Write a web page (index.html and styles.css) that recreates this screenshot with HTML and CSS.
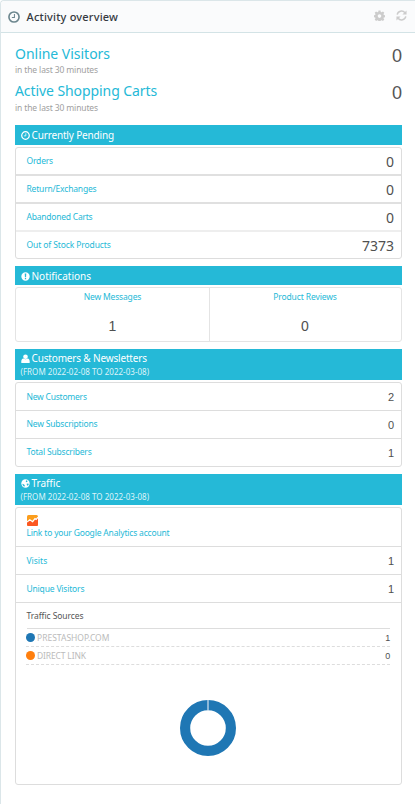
FILE: index.html
```
<!DOCTYPE html>
<html lang="en">
<head>
<meta charset="utf-8">
<title>Activity overview</title>
<link rel="stylesheet" href="styles.css">
</head>
<body>
<svg class="defs" aria-hidden="true">
  <symbol id="clock" viewBox="0 0 14 14"><circle cx="7" cy="7" r="5.9" fill="none" stroke="currentColor" stroke-width="1.9"/><path d="M7.500 3.600v4H4.500" fill="none" stroke="currentColor" stroke-width="1.200"/></symbol>
  <symbol id="gear" viewBox="0 0 24 24"><path fill="currentColor" fill-rule="evenodd" d="M9.800 1h4.400l.6 3.100 2 .8 2.700-1.800 3 3-1.800 2.700.8 2 2.500.6v4.200l-2.500.6-.8 2 1.800 2.700-3 3-2.700-1.800-2 .8-.6 3.100H9.800l-.6-3.100-2-.8-2.700 1.800-3-3 1.800-2.700-.8-2-2.500-.6v-4.200l2.500-.6.8-2L1.500 6.100l3-3 2.700 1.800 2-.8zM12 9.300a4 4 0 1 0 0 8 4 4 0 0 0 0-8z"/></symbol>
  <symbol id="refresh" viewBox="0 0 24 24"><path fill="none" stroke="currentColor" stroke-width="3.200" d="M2.600 10a9.500 9.500 0 0 1 16.800-4M21.400 14a9.500 9.500 0 0 1-16.800 4"/><path fill="currentColor" d="M23 1v9h-9zM1 23v-9h9z"/></symbol>
  <symbol id="alert" viewBox="0 0 14 14"><path fill="currentColor" fill-rule="evenodd" d="M7 .5a6.500 6.500 0 1 0 0 13 6.500 6.500 0 0 0 0-13zM5.800 2.500h2.400L7.900 8.200H6.100zM6 9.300h2v2H6z"/></symbol>
  <symbol id="user" viewBox="0 0 14 14"><circle cx="7" cy="4.200" r="3.600" fill="currentColor"/><path fill="currentColor" d="M.5 14c-.5-4.500.8-6.800 3.300-6.900 1.800 1.500 4.600 1.500 6.400 0 2.500.1 3.800 2.400 3.300 6.900z"/></symbol>
  <symbol id="globe" viewBox="0 0 14 14"><circle cx="7" cy="7" r="6.500" fill="currentColor"/><path class="land" d="M8 1.800l2.500 1.400-1.200 1.600-1.600.3-.2-1.500zM1.800 7.300l2.400.9 1.800 1.400-.8 2.600-1.700-1.200zM8.800 7.500l2.400-.6.900 1.300-1.400 2.300-1.500-.8z"/></symbol>
</svg>
<section class="panel">
  <header class="panel-head">
    <svg class="head-icon"><use href="#clock"/></svg>
    <h1 class="title">Activity overview</h1>
    <svg class="tool"><use href="#gear"/></svg>
    <svg class="tool"><use href="#refresh"/></svg>
  </header>
  <div class="panel-body">
    <div class="live">
      <div><a class="live-name">Online Visitors</a><small class="note">in the last 30 minutes</small></div>
      <span class="live-value">0</span>
    </div>
    <div class="live">
      <div><a class="live-name carts">Active Shopping Carts</a><small class="note low">in the last 30 minutes</small></div>
      <span class="live-value">0</span>
    </div>

    <h2 class="bar pending-bar"><svg><use href="#clock"/></svg><span class="tight">Currently Pending</span></h2>
    <ul class="box pending">
      <li><a>Orders</a><b>0</b></li>
      <li><a>Return/Exchanges</a><b>0</b></li>
      <li><a class="tighter">Abandoned Carts</a><b>0</b></li>
      <li><a class="looser">Out of Stock Products</a><b>7373</b></li>
    </ul>

    <h2 class="bar notice-bar"><svg><use href="#alert"/></svg><span>Notifications</span></h2>
    <div class="box notices">
      <div><a>New Messages</a><b>1</b></div>
      <div><a class="looser">Product Reviews</a><b>0</b></div>
    </div>

    <div class="bar tall-bar">
      <h2><svg><use href="#user"/></svg><span class="tight">Customers &amp; Newsletters</span></h2>
      <small>(FROM 2022-02-08 TO 2022-03-08)</small>
    </div>
    <ul class="box customers">
      <li><a class="tighter">New Customers</a><b>2</b></li>
      <li><a>New Subscriptions</a><b>0</b></li>
      <li><a>Total Subscribers</a><b>1</b></li>
    </ul>

    <div class="bar tall-bar">
      <h2><svg><use href="#globe"/></svg><span>Traffic</span></h2>
      <small>(FROM 2022-02-08 TO 2022-03-08)</small>
    </div>
    <ul class="box traffic">
      <li class="analytics">
        <svg viewBox="0 0 11 11"><rect width="11" height="11" rx="1.500" fill="#fb9d1c"/><path d="M0 7 3.200 5 6 7.500 8 3.500 11 3.300V9.500a1.500 1.500 0 0 1-1.500 1.500h-8A1.500 1.500 0 0 1 0 9.500z" fill="#fb5722"/><path d="M0 7 2.800 4.700 5.600 6.700 8 3.600 9.200 4.300 11 2.200" fill="none" stroke="#fff" stroke-width="1.300"/></svg>
        <a>Link to your Google Analytics account</a>
      </li>
      <li><a class="natural">Visits</a><b>1</b></li>
      <li><a>Unique Visitors</a><b>1</b></li>
      <li class="sources">
        <h3>Traffic Sources</h3>
        <div class="source"><i class="dot blue"></i><span class="natural">PRESTASHOP.COM</span><em>1</em></div>
        <div class="source"><i class="dot orange"></i><span>DIRECT LINK</span><em>0</em></div>
        <svg class="donut" viewBox="0 0 56 56"><circle cx="28" cy="28" r="22.900" fill="none" stroke="#1f77b4" stroke-width="10.200"/><path d="M28 0v11" stroke="#d5e4f0" stroke-width="1.200"/></svg>
      </li>
    </ul>
  </div>
</section>
</body>
</html>
```
FILE: styles.css
```
* { box-sizing: border-box; }
body { margin: 0; background: #fff; font: 8.5px/12px "Noto Sans", sans-serif; color: #555; }
h1, h2, h3, ul { margin: 0; padding: 0; font-weight: 400; list-style: none; }
svg { display: block; flex: none; }
.defs { position: absolute; width: 0; height: 0; }
a { color: #25b9d7; letter-spacing: -.18px; white-space: nowrap; }
b, em { font-weight: 400; font-style: normal; }

.panel { height: 804px; border: solid #dbe6e9; border-width: 1px 0 0 1px; border-radius: 4px 0 0; }
.panel-head { display: flex; align-items: center; height: 32px; padding: 0 8.5px 0 7px; background: #fafbfc; border-bottom: 1px solid #d3e3e6; border-radius: 4px 0 0; }
.head-icon { width: 12px; height: 12px; margin-right: 6.5px; color: #6c868e; }
.title { flex: 1; font-size: 11px; font-weight: 500; line-height: 16px; letter-spacing: .19px; color: #363a41; }
.tool { width: 11px; height: 11px; margin: -2px 0 0 10.500px; color: #ccc; }

.panel-body { padding: 12px 13px 0 14px; }
.live { display: flex; justify-content: space-between; height: 37px; }
.live-name { display: block; font-size: 14px; line-height: 18px; letter-spacing: -.02px; }
.carts { letter-spacing: -.08px; }
.note { display: block; margin-top: 1px; font-size: 8.5px; line-height: 12px; letter-spacing: -.13px; color: #a0a0a0; }
.low { margin-top: 2px; }
.live-value { font: 18px/22px "Liberation Sans", sans-serif; color: #555; }

.bar { background: #25b9d7; color: #fff; font-size: 10px; padding: 0 5px; }
.pending-bar, .notice-bar, .bar h2 { display: flex; align-items: center; }
.bar svg { width: 9px; height: 9px; margin: 1px 1.500px 0 1px; }
.pending-bar { height: 20px; margin-top: 6px; }
.notice-bar { height: 19px; margin-top: 7px; }
.tall-bar { height: 31px; margin-top: 7px; padding-top: 2px; }
.bar h2 { height: 14px; font-size: 10px; }
.bar small { display: block; padding: 1px 0 0 .5px; font-size: 8px; line-height: 12px; letter-spacing: .03px; color: #ddf4f9; }
.tight { letter-spacing: -.16px; }
.land { fill: #25b9d7; }

.box { margin-top: 2px; border: 1px solid #ddd; border-radius: 3px; }
.box li { display: flex; align-items: center; justify-content: space-between; height: 28px; padding: 0 7px 0 10.5px; border-bottom: 1px solid #ddd; }
.box li:last-child { border-bottom: 0; }
.pending { height: 112px; }
.box.pending li { border-bottom: 2px solid #e0e0e0; }
.box.pending li:nth-child(3) { border-color: #eee; }
.box.pending li:last-child { border-color: transparent; }
.pending b { font-size: 14px; line-height: 18px; padding-top: 2px; color: #505050; }
.tighter { letter-spacing: -.23px; }
.looser { letter-spacing: -.11px; }
.natural { letter-spacing: 0; }

.notices { display: flex; height: 55px; border-color: #e4e4e4; }
.notices div { width: 193px; display: flex; flex-direction: column; align-items: center; padding-top: 3px; }
.notices div + div { flex: 1; padding-right: 1px; border-left: 1px solid #e4e4e4; }
.notices b { margin-top: 14px; font: 14px/18px "Liberation Sans", sans-serif; color: #505050; }

.customers { height: 85px; }
.customers li + li a { margin-top: -2px; }
.customers b, .traffic b { font: 11px/14px "Liberation Sans", sans-serif; color: #505050; }

.traffic { height: 278px; }
.box .analytics { height: 39px; flex-direction: column; align-items: flex-start; justify-content: flex-start; padding-top: 7px; }
.analytics svg { width: 11px; height: 11px; margin: 0 0 1px .5px; }
.box .sources { display: block; height: auto; padding: 0 11px 0 10px; }
.sources h3 { height: 26px; margin-left: .5px; padding-top: 7px; border-bottom: 1px solid #ddd; font-size: 8.5px; line-height: 12px; letter-spacing: -.07px; color: #555; }
.source { display: flex; align-items: center; height: 18px; border-bottom: 1px dashed #ddd; color: #bbb; letter-spacing: -.15px; }
.dot { width: 9px; height: 9px; margin-right: 2px; border-radius: 50%; }
.blue { background: #1f77b4; }
.orange { background: #ff7f0e; }
.source em { margin-left: auto; font: 9px/12px "Liberation Sans", sans-serif; color: #505050; }
.donut { width: 56px; height: 56px; margin: 35px 0 0 154px; }
```
